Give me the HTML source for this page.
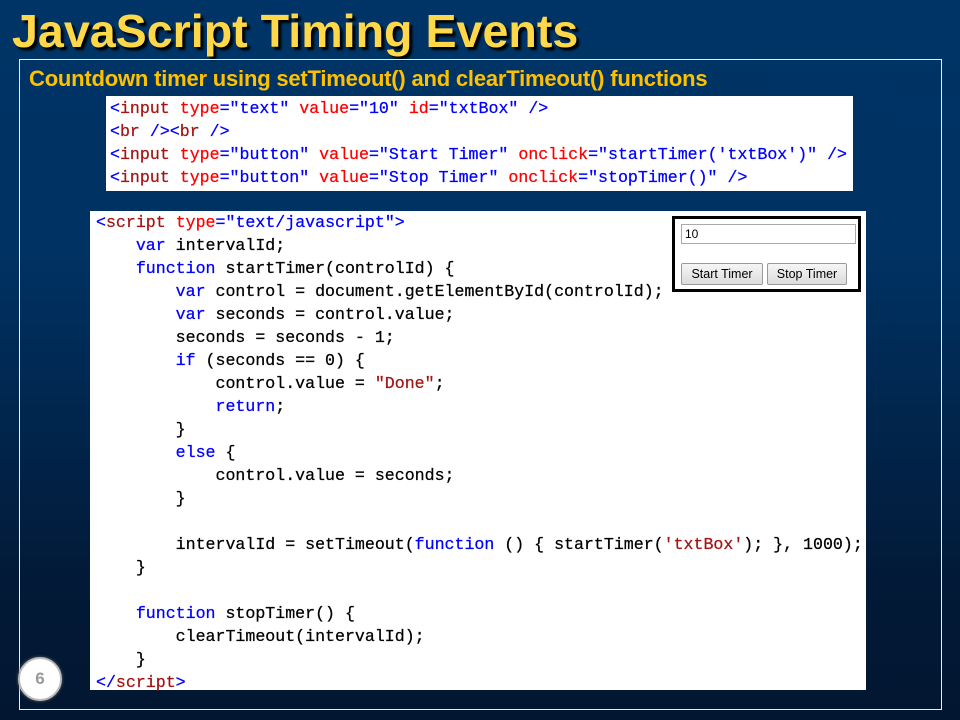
<!DOCTYPE html>
<html><head><meta charset="utf-8"><style>
*{margin:0;padding:0;box-sizing:border-box}
body{width:960px;height:720px;overflow:hidden;background:linear-gradient(#003466 0%,#003263 35%,#021a38 80%,#021630 100%);font-family:"Liberation Sans",sans-serif;position:relative}
.title{position:absolute;left:12px;top:4px;font-size:46.6px;font-weight:bold;color:#ffd84a;text-shadow:3px 3px 2px #000;letter-spacing:0px}
.frame{position:absolute;left:19px;top:59px;width:923px;height:651px;border:1px solid #e8eef5}
.sub{position:absolute;left:29px;top:66px;font-size:22px;font-weight:bold;color:#ffc000;letter-spacing:-0.2px}
pre{font-family:"Liberation Mono",monospace;font-size:16.6px;line-height:23px;color:#000;background:#fff;position:absolute;white-space:pre;-webkit-text-stroke:0.25px currentColor}
.b1{left:106px;top:96px;width:747px;height:95px;padding:1px 0 0 4px}
.b2{left:90px;top:211px;width:776px;height:479px;padding-top:0;padding-left:6px}
.t{color:#0000ff}.n{color:#a31515}.a{color:#ff0000}.v{color:#0000ff}.k{color:#0000ff}.s{color:#a31515}
.demo{position:absolute;left:672px;top:216px;width:189px;height:76px;border:3px solid #000;background:#fff}
.inp{position:absolute;left:6px;top:5px;width:175px;height:20px;border:1px solid #aaa;font-size:12px;padding:2px 3px;color:#000;font-family:"Liberation Sans",sans-serif}
.btn{position:absolute;top:44px;height:22px;border:1px solid #999;border-radius:2px;background:linear-gradient(#f6f6f6,#dcdcdc);font-size:12.5px;text-align:center;line-height:20px;color:#000}
.num{position:absolute;left:18px;top:657px;width:44px;height:44px;border-radius:50%;background:#fff;border:2px solid #bbb;box-shadow:0 0 3px #666;color:#999;font-weight:bold;font-size:17px;text-align:center;line-height:40px}
</style></head><body>
<div class="title">JavaScript Timing Events</div>
<div class="frame"></div>
<div class="sub">Countdown timer using setTimeout() and clearTimeout() functions</div>
<pre class="b1"><span class="t">&lt;</span><span class="n">input</span> <span class="a">type</span><span class="t">="text"</span> <span class="a">value</span><span class="t">="10"</span> <span class="a">id</span><span class="t">="txtBox"</span> <span class="t">/&gt;</span>
<span class="t">&lt;</span><span class="n">br</span> <span class="t">/&gt;&lt;</span><span class="n">br</span> <span class="t">/&gt;</span>
<span class="t">&lt;</span><span class="n">input</span> <span class="a">type</span><span class="t">="button"</span> <span class="a">value</span><span class="t">="Start Timer"</span> <span class="a">onclick</span><span class="t">="startTimer('txtBox')"</span> <span class="t">/&gt;</span>
<span class="t">&lt;</span><span class="n">input</span> <span class="a">type</span><span class="t">="button"</span> <span class="a">value</span><span class="t">="Stop Timer"</span> <span class="a">onclick</span><span class="t">="stopTimer()"</span> <span class="t">/&gt;</span></pre>
<pre class="b2"><span class="t">&lt;</span><span class="n">script</span> <span class="a">type</span><span class="t">="text/javascript"&gt;</span>
    <span class="k">var</span> intervalId;
    <span class="k">function</span> startTimer(controlId) {
        <span class="k">var</span> control = document.getElementById(controlId);
        <span class="k">var</span> seconds = control.value;
        seconds = seconds - 1;
        <span class="k">if</span> (seconds == 0) {
            control.value = <span class="s">"Done"</span>;
            <span class="k">return</span>;
        }
        <span class="k">else</span> {
            control.value = seconds;
        }

        intervalId = setTimeout(<span class="k">function</span> () { startTimer(<span class="s">'txtBox'</span>); }, 1000);
    }

    <span class="k">function</span> stopTimer() {
        clearTimeout(intervalId);
    }
<span class="t">&lt;/</span><span class="n">script</span><span class="t">&gt;</span></pre>
<div class="demo">
<div class="inp">10</div>
<div class="btn" style="left:6px;width:82px">Start Timer</div>
<div class="btn" style="left:92px;width:80px">Stop Timer</div>
</div>
<div class="num">6</div>
</body></html>
